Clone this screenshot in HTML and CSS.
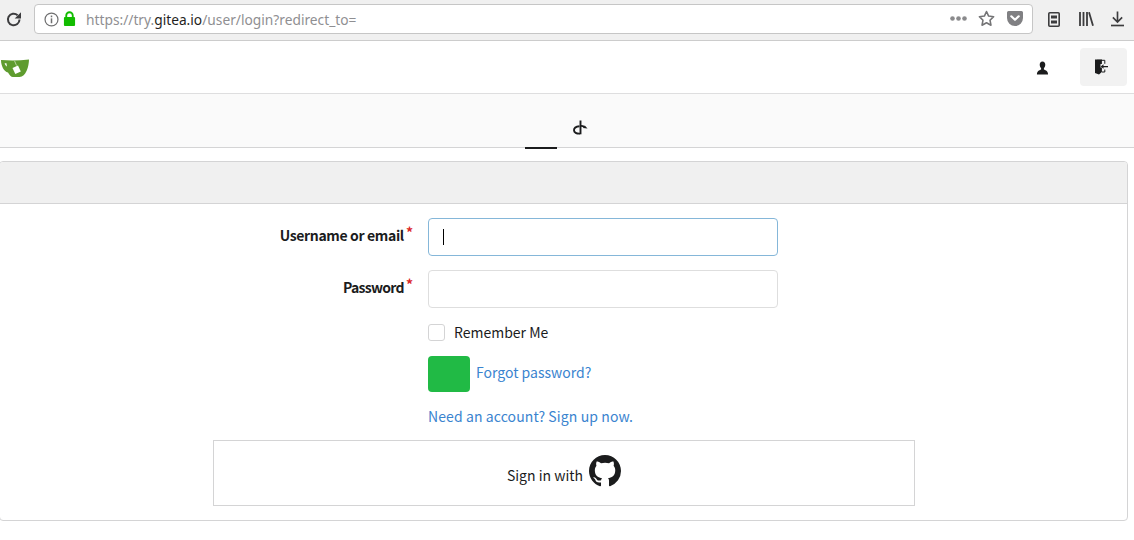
FILE: index.html
```
<!DOCTYPE html>
<html lang="en">
<head>
<meta charset="utf-8">
<title>Sign In</title>
<link rel="stylesheet" href="styles.css">
</head>
<body>
<div class="toolbar">
  <button class="tb-btn reload" aria-label="Reload">
    <svg viewBox="0 0 16 16" width="16" height="16"><path d="M13.500 8.500A5.800 5.800 0 1 1 11.600 4.200" fill="none" stroke="#3c3c3e" stroke-width="2"/><path d="M15 1.200v6.300H8.700z" fill="#3c3c3e"/></svg>
  </button>
  <div class="urlbar">
    <svg class="info" viewBox="0 0 16 16" width="15" height="15"><circle cx="8" cy="8" r="6.900" fill="none" stroke="#6f6f70" stroke-width="1.300"/><rect x="7.200" y="6.800" width="1.600" height="5.200" fill="#6f6f70"/><rect x="7.200" y="3.800" width="1.600" height="1.800" fill="#6f6f70"/></svg>
    <svg class="lock" viewBox="0 0 14 16" width="13" height="15"><path d="M3.500 7V4.800a3.500 3.500 0 0 1 7 0V7" fill="none" stroke="#12bc00" stroke-width="2"/><rect x="1" y="6.500" width="12" height="9.500" rx="1" fill="#12bc00"/></svg>
    <span class="url">https://try.<b>gitea.io</b>/user/login?redirect_to=</span>
    <span class="spacer"></span>
    <svg class="dots" viewBox="0 0 17 5" width="17" height="5"><circle cx="2.500" cy="2.500" r="2.300" fill="#8a8a8c"/><circle cx="8.500" cy="2.500" r="2.300" fill="#8a8a8c"/><circle cx="14.500" cy="2.500" r="2.300" fill="#8a8a8c"/></svg>
    <svg class="star" viewBox="0 0 16 16" width="17" height="17"><path d="M8 1.400l2 4.300 4.700.6-3.400 3.300.9 4.700L8 12l-4.200 2.300.9-4.700L1.300 6.300 6 5.700z" fill="none" stroke="#747476" stroke-width="1.500" stroke-linejoin="round"/></svg>
    <svg class="pocket" viewBox="0 0 16 15" width="16" height="15"><path d="M1.500 0h13A1.500 1.500 0 0 1 16 1.500V7A8 8 0 0 1 0 7V1.500A1.500 1.500 0 0 1 1.500 0z" fill="#808083"/><path d="M4.300 5.300L8 8.800l3.700-3.500" fill="none" stroke="#fff" stroke-width="2.200" stroke-linecap="round" stroke-linejoin="round"/></svg>
  </div>
  <div class="tb-right">
    <svg class="tb-panel" viewBox="0 0 12 15" width="12" height="15"><rect x=".8" y=".8" width="10.400" height="13.400" rx="1" fill="none" stroke="#3c3c3e" stroke-width="1.600"/><rect x="3" y="3.500" width="6" height="3" fill="#3c3c3e"/><rect x="3" y="8.500" width="6" height="3" fill="#3c3c3e"/></svg>
    <svg class="tb-lib" viewBox="0 0 15 14" width="15" height="14"><path d="M1 0v14M4.500 0v14M8 0v14M10 .3l4 13.400" fill="none" stroke="#3c3c3e" stroke-width="1.800"/></svg>
    <svg class="tb-down" viewBox="0 0 14 16" width="13" height="16"><path d="M7 0v11M2 6.200L7 11.200l5-5" fill="none" stroke="#3c3c3e" stroke-width="1.800"/><path d="M0 15h14" stroke="#3c3c3e" stroke-width="1.800"/></svg>
  </div>
</div>
<nav class="topnav">
  <svg class="logo" viewBox="0 0 30 19" width="30" height="19"><path d="M1 2C10 2.800 20 2.600 29 1.500 29 8 26 19 19.500 19H13C11 19 9.500 17 8 14.500 4 13.500 1 8 1 2z" fill="#5f9c2f"/><path d="M4.600 5.300c.4 1.300 1.100 2.500 2.300 3.300L6.500 5.300z" fill="#fff"/><path d="M12.500 10l5.500-2.500 2.800 6-5.500 2.600z" fill="#fff"/><path d="M14.500 2.800l2 4.700" stroke="#dfe9d2" stroke-width=".7"/></svg>
  <span class="spacer"></span>
  <a class="nav-item" href="#" aria-label="Register">
    <svg class="nav-user" viewBox="0 0 14 14" width="13" height="14"><path d="M7 0c2 0 3 1.500 3 3.500 0 1.500-.7 3-1.500 3.800v1.400C10 9.500 13 10 13 14H1c0-4 3-4.500 4.500-5.300V7.300C4.700 6.500 4 5 4 3.500 4 1.500 5 0 7 0z" fill="#1b1c1d"/></svg>
  </a>
  <a class="nav-item active" href="#" aria-label="Sign in">
    <svg class="nav-door" viewBox="0 0 14 16" width="14" height="16"><path d="M1 .5h7l-.1 1.500V5H6.500v3.500h1.400V13L5 15.500 1 14z" fill="#1b1c1d"/><path d="M3 1.300h7.800v3.500M10.800 10.500V13H8" fill="none" stroke="#1b1c1d" stroke-width="1"/><path d="M14 6.900H9.500V5.200L6.700 7.500l2.800 2.300V8.300H14z" fill="#1b1c1d"/></svg>
  </a>
</nav>
<div class="tabs">
  <a class="tab active" href="#"></a>
  <a class="tab octicon-tab" href="#" aria-label="OpenID">
    <svg viewBox="0 0 15 15" width="15" height="15"><path d="M7.500 .5v13.800" fill="none" stroke="#1b1c1d" stroke-width="1.900"/><path d="M6.500 6.200C3 6.500 1 8 1 10.200c0 2.300 2.500 3.600 6 3.400" fill="none" stroke="#1b1c1d" stroke-width="1.900"/><path d="M8 5.800c1.300 0 2.400.4 3.300 1" fill="none" stroke="#1b1c1d" stroke-width="1.700"/><path d="M14.500 8.400L9.800 8l2-2.600z" fill="#1b1c1d"/></svg>
  </a>
</div>
<main class="card">
  <div class="card-head"></div>
  <form class="card-body">
    <div class="field">
      <label class="label req" for="user">Username or email</label>
      <div class="fake-input focus" id="user"><span class="caret"></span></div>
    </div>
    <div class="field">
      <label class="label label-short req" for="pass">Password</label>
      <div class="fake-input" id="pass"></div>
    </div>
    <div class="line remember">
      <span class="checkbox"></span>
      <span>Remember Me</span>
    </div>
    <div class="line actions">
      <button class="submit" type="button"></button>
      <a href="#">Forgot password?</a>
    </div>
    <div class="line signup"><a href="#">Need an account? Sign up now.</a></div>
    <div class="oauth">
      <span class="oauth-text">Sign in with</span>
      <svg viewBox="0 0 16 16" width="32" height="32"><path fill="#1b1c1d" d="M8 0C3.580 0 0 3.580 0 8c0 3.540 2.290 6.530 5.470 7.590.4.070.55-.17.55-.38 0-.19-.01-.82-.01-1.490-2.010.37-2.530-.49-2.690-.94-.09-.23-.48-.94-.82-1.130-.28-.15-.68-.52-.01-.53.63-.01 1.080.58 1.230.82.720 1.210 1.870.87 2.330.66.070-.52.280-.87.510-1.070-1.780-.2-3.640-.89-3.640-3.950 0-.87.310-1.590.820-2.150-.08-.2-.360-1.020.080-2.120 0 0 .670-.21 2.200.820.640-.18 1.320-.27 2-.27s1.360.09 2 .27c1.530-1.040 2.200-.82 2.200-.82.440 1.100.160 1.920.080 2.120.51.560.820 1.270.820 2.150 0 3.070-1.870 3.750-3.650 3.950.290.250.540.730.540 1.480 0 1.070-.010 1.930-.010 2.200 0 .21.150.460.550.380A8.013 8.013 0 0 0 16 8c0-4.420-3.580-8-8-8z"/></svg>
    </div>
  </form>
</main>
</body>
</html>
```

FILE: styles.css
```
* { box-sizing: border-box; }
html, body { margin: 0; padding: 0; }
body {
  width: 1134px;
  height: 540px;
  overflow: hidden;
  background: #fff;
  color: #1b1c1d;
  font-family: "Noto Sans CJK SC", "Noto Sans", sans-serif;
  font-size: 14px;
}
a { color: #3a84cf; text-decoration: none; }
.spacer { flex: 1; }

.toolbar {
  height: 41px;
  display: flex;
  align-items: center;
  background: #f0f0f0;
  border-bottom: 1px solid #cccccc;
  padding: 0 10px 0 6px;
}
.tb-btn { width: 16px; height: 16px; padding: 0; margin-top: -2px; border: 0; background: none; display: flex; }
.urlbar {
  width: 999px;
  height: 30px;
  margin-left: 12px;
  margin-top: -3px;
  display: flex;
  align-items: center;
  background: #fff;
  border: 1px solid #c6c6c6;
  border-radius: 4px;
  padding: 0 9px 0 9px;
}
.info { margin-top: 1px; }
.lock { margin-left: 4px; margin-top: -1px; }
.url {
  margin-left: 10px;
  margin-top: 1px;
  font-family: "Noto Sans", sans-serif;
  font-size: 13.750px;
  color: #8f8f92;
}
.url b { font-weight: 400; color: #1f1f22; }
.star { margin-left: 11px; }
.pocket { margin-left: 12px; }
.tb-right { display: flex; align-items: center; margin-left: 15px; margin-top: -2px; }
.tb-lib { margin-left: 19px; }
.tb-down { margin-left: 17px; }

.topnav {
  height: 53px;
  display: flex;
  align-items: center;
  border-bottom: 1px solid #dededf;
  padding: 0 7px 0 0;
}
.logo { margin-top: 1px; }
.nav-item { width: 47px; height: 38px; display: flex; align-items: center; justify-content: center; border-radius: 4px; }
.nav-item.active { background: #f2f2f2; margin-left: 15px; }
.nav-user { margin-top: 2px; margin-left: 2px; }
.nav-door { margin-right: 6px; }

.tabs {
  height: 54px;
  display: flex;
  background: #fafafa;
  border-bottom: 1px solid #d4d4d5;
  padding-left: 525px;
}
.tab { height: 55px; display: flex; align-items: center; justify-content: center; }
.tab.active { width: 32px; border-bottom: 2px solid #1b1c1d; }
.octicon-tab { margin-left: 16px; width: 15px; padding-top: 12px; }

.card {
  width: 1129px;
  height: 360px;
  margin: 13px 0 0 -1px;
  border: 1px solid #d4d4d5;
  border-radius: 4px;
}
.card-head { height: 42px; background: #f0f0f0; border-bottom: 1px solid #d4d4d5; border-radius: 3px 3px 0 0; }
.card-body { display: block; padding-top: 14px; }
.field { display: flex; align-items: center; height: 38px; margin-bottom: 14px; }
.label { width: 413px; text-align: right; font-weight: 700; font-size: 14px; letter-spacing: -.35px; margin-top: -4px; }
.label-short { letter-spacing: -.7px; }
.req::after { content: "*"; color: #db2828; margin-left: 2px; position: relative; top: -3px; letter-spacing: 0; }
.fake-input {
  width: 350px;
  height: 38px;
  margin-left: 15px;
  border: 1px solid #dedede;
  border-radius: 4px;
  display: flex;
  align-items: center;
  padding-left: 14px;
}
.fake-input.focus { border-color: #85b7d9; }
.caret { width: 1px; height: 16px; background: #000; }
.line { margin-left: 428px; display: flex; align-items: center; }
.remember { height: 18px; margin-top: 15px; gap: 9px; }
.checkbox { width: 17px; height: 17px; border: 1px solid #d4d4d5; border-radius: 3px; }
.actions { margin-top: 15px; gap: 6px; }
.actions a { margin-top: -4px; }
.submit { width: 42px; height: 36px; padding: 0; border: 0; border-radius: 4px; background: #21ba45; }
.signup { margin-top: 14px; height: 20px; letter-spacing: .1px; }
.oauth {
  width: 702px;
  height: 66px;
  margin: 14px 0 0 213px;
  border: 1px solid #d4d4d5;
  display: flex;
  align-items: center;
  justify-content: center;
  gap: 6px;
}
.oauth svg { margin-top: -4px; }
.oauth-text { margin-top: 4px; }
```
